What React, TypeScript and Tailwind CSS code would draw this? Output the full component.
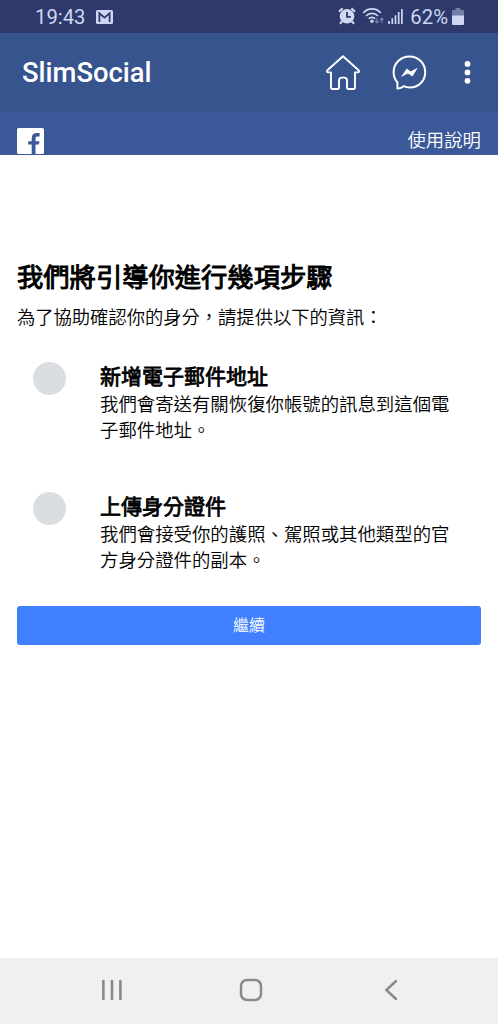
type Step = {
  id: string;
  title: string;
  description: string;
};

const steps: Step[] = [
  {
    id: "email",
    title: "新增電子郵件地址",
    description: "我們會寄送有關恢復你帳號的訊息到這個電子郵件地址。",
  },
  {
    id: "identity",
    title: "上傳身分證件",
    description: "我們會接受你的護照、駕照或其他類型的官方身分證件的副本。",
  },
];

function StatusBar() {
  return (
    <div className="flex h-[33px] shrink-0 items-center bg-[#2d3a6b] pl-[35px] pr-[34px] text-[20.3px] leading-none text-[#cfd7f2]">
      <span className="pt-[2px]">19:43</span>
      {/* mail notification */}
      <svg className="ml-[10px] h-[14px] w-[17px]" viewBox="0 0 17 14" fill="none">
        <rect width="17" height="14" rx="1.5" fill="#cfd7f2" />
        <path d="M3.4 12V3.3L8.5 7.6L13.6 3.3V12" stroke="#2d3a6b" strokeWidth="1.8" />
      </svg>
      <div className="ml-auto flex items-center">
        <svg className="h-[18px] w-[18px]" viewBox="0 0 18 18" fill="none">
          <circle cx="9" cy="9.3" r="7.3" fill="#cfd7f2" />
          <path d="M1 4.8L4.6 1.4M17 4.8L13.4 1.4M4 14.4L2 16.8M14 14.4L16 16.8" stroke="#cfd7f2" strokeWidth="2.2" />
          <path d="M9 5V9.8H12.8" stroke="#2d3a6b" strokeWidth="1.8" />
        </svg>
        <svg className="ml-[6px] h-[18px] w-[23px]" viewBox="0 0 23 18" fill="none">
          <path d="M1.2 6C6 0.4 14 0.4 18.8 6M4 9C7.2 5.4 12.8 5.4 16 9M6.8 11.8C8.6 9.8 11.4 9.8 13.2 11.8" stroke="#cfd7f2" strokeWidth="1.7" />
          <circle cx="10" cy="14.2" r="1.7" fill="#cfd7f2" />
          <path d="M15 11V15.6M13.2 13.9L15 15.8L16.8 13.9M19.8 16V11.4M18 13.1L19.8 11.2L21.6 13.1" stroke="#7a86b3" strokeWidth="1.2" />
        </svg>
        <svg className="ml-[3px] h-[16px] w-[15px]" viewBox="0 0 15 16" fill="none">
          <path d="M1.1 16V13M4.3 16V10.3M7.5 16V7.2M10.7 16V4M13.9 16V1" stroke="#cfd7f2" strokeWidth="1.7" />
        </svg>
        <span className="ml-[7px] pt-[2px]">62%</span>
        <svg className="ml-[4px] h-[17px] w-[12px]" viewBox="0 0 12 17">
          <path d="M3.5 0H8.5V2H11A1 1 0 0 1 12 3V8H0V3A1 1 0 0 1 1 2H3.5Z" fill="#737da6" />
          <path d="M0 7.5H12V16A1 1 0 0 1 11 17H1A1 1 0 0 1 0 16Z" fill="#cfd7f2" />
        </svg>
      </div>
    </div>
  );
}

function AppBar() {
  return (
    <header className="flex h-[79px] shrink-0 items-center bg-[#37548f] pl-[22px] pr-[27px] text-white">
      <h1 className="pt-[3px] text-[27.4px] font-medium leading-none">SlimSocial</h1>
      <button className="ml-auto">
        <svg className="h-[36px] w-[34px]" viewBox="0 0 34 36" fill="none">
          <path
            d="M17 1.2L1.4 15.3C0.6 16.2 1 17.4 2.2 17.4H5V32.3Q5 34 6.7 34H11.4Q13 34 13 32.3V25.6Q13 22.6 15.8 22.6H18.2Q21 22.6 21 25.6V32.3Q21 34 22.6 34H27.3Q29 34 29 32.3V17.4H31.8C33 17.4 33.4 16.2 32.6 15.3Z"
            stroke="white"
            strokeWidth="1.9"
            strokeLinejoin="round"
          />
        </svg>
      </button>
      <button className="ml-[32px]">
        <svg className="h-[36px] w-[35px]" viewBox="0 0 35 36" fill="none">
          <path
            d="M5.4 27.2C2.9 24.5 1.6 21.3 1.6 17.5C1.6 8.5 8.6 1.4 17.5 1.4C26.4 1.4 33.2 8.4 33.2 17.2C33.2 26.2 26.2 32.6 17.8 32.6C15.4 32.6 13.5 32.1 11.6 31.2C9.8 32.8 7.8 33.6 5.4 33.4Z"
            stroke="white"
            strokeWidth="2"
            strokeLinejoin="round"
          />
          <path d="M9 21.9L14.8 13.4L18.6 16.4L25.8 12.8L20.4 21.4L16 18.4Z" fill="white" />
        </svg>
      </button>
      <button className="ml-[37px]">
        <svg className="h-[24px] w-[7px]" viewBox="0 0 7 24" fill="white">
          <circle cx="3.5" cy="2.9" r="2.9" />
          <circle cx="3.5" cy="11.4" r="2.9" />
          <circle cx="3.5" cy="19.8" r="2.9" />
        </svg>
      </button>
    </header>
  );
}

function SiteBar() {
  return (
    <div className="flex h-[43px] shrink-0 items-end justify-between bg-[#3b5998] pl-[17px] pr-[17px] text-white">
      <svg className="mb-[1px] h-[26px] w-[27px]" viewBox="0 0 27 26">
        <rect width="27" height="26" rx="1.6" fill="white" />
        <path
          d="M14.7 26V16.6H11.2V13.2H14.7V10.4C14.7 6.9 16.7 5.1 19.8 5.1H22.6V8.4H20.5C19 8.4 18.5 9.1 18.5 10.4V13.2H22.4L21.9 16.6H18.5V26Z"
          fill="#3b5998"
        />
      </svg>
      <a className="text-[18.4px] font-[350] leading-[28px]">使用說明</a>
    </div>
  );
}

function StepRow({ step }: { step: Step }) {
  return (
    <li className="flex h-[130px] items-start">
      <span className="h-[33px] w-[33px] shrink-0 rounded-full bg-[#dadde1]" />
      <div className="ml-[34px] w-[352px] pt-[2px]">
        <h3 className="text-[21px] font-normal leading-[26px] [-webkit-text-stroke:0.8px_black]">{step.title}</h3>
        <p className="pt-[2px] text-[18.4px] font-[350] leading-[26px]">{step.description}</p>
      </div>
    </li>
  );
}

function NavBar() {
  return (
    <nav className="flex h-[66px] shrink-0 items-center bg-[#f0f0f0] pl-[101px] pb-[2px]">
      <svg className="h-[22px] w-[22px]" viewBox="0 0 22 22" stroke="#8a8a8a" strokeWidth="2.6" strokeLinecap="round">
        <path d="M2.4 2V20M11 2V20M19.4 2V20" />
      </svg>
      <svg className="ml-[116px] h-[24px] w-[24px]" viewBox="0 0 24 24" fill="none">
        <rect x="2" y="2" width="20" height="20" rx="6" stroke="#8a8a8a" strokeWidth="2.5" />
      </svg>
      <svg className="ml-[121px] h-[22px] w-[14px]" viewBox="0 0 14 22" fill="none">
        <path d="M12 2L2.4 11L12 20" stroke="#8a8a8a" strokeWidth="2.5" strokeLinecap="round" />
      </svg>
    </nav>
  );
}

export default function App() {
  return (
    <div className="flex h-[1024px] w-[498px] flex-col overflow-hidden bg-white font-['Roboto','Noto_Sans_CJK_TC',sans-serif] text-black">
      <StatusBar />
      <AppBar />
      <SiteBar />
      <main lang="zh-Hant" className="flex-1 px-[17px] pt-[107px]">
        <h2 className="text-[26.3px] font-normal leading-[32px] [-webkit-text-stroke:1px_black]">
          我們將引導你進行幾項步驟
        </h2>
        <p className="mt-[11px] text-[18.3px] font-[350] leading-[26px]">為了協助確認你的身分，請提供以下的資訊：</p>
        <ul className="mt-[31px] pl-[16px]">
          {steps.map((step) => (
            <StepRow key={step.id} step={step} />
          ))}
        </ul>
        <button className="mt-[-16px] block h-[39px] w-[464px] rounded-[3px] bg-[#4080ff] text-[16px] font-[350] leading-[39px] text-white">
          繼續
        </button>
      </main>
      <NavBar />
    </div>
  );
}
